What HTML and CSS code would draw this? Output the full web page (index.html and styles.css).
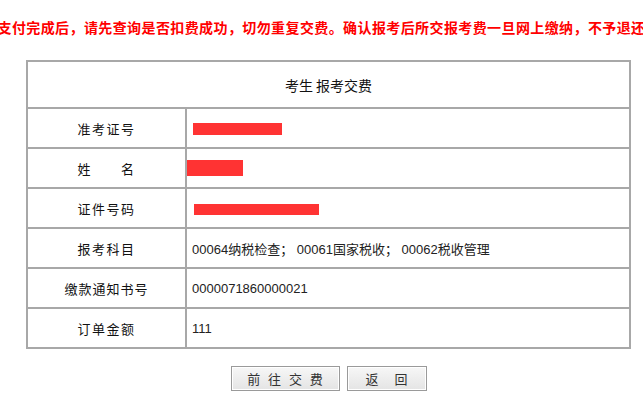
FILE: index.html
```html
<!DOCTYPE html>
<html lang="zh-CN">
<head>
<meta charset="utf-8">
<title>考生报考交费</title>
<link rel="stylesheet" href="styles.css">
</head>
<body>
<div class="notice"><span class="notice-text">支付完成后，请先查询是否扣费成功，切勿重复交费。确认报考后所交报考费一旦网上缴纳，不予退还</span></div>
<div class="wrap">
  <table class="pay">
    <tr class="head"><td colspan="2">考生 报考交费</td></tr>
    <tr><td class="lbl">准考证号</td><td class="val"><span class="mask m1"></span></td></tr>
    <tr><td class="lbl">姓　　名</td><td class="val v-name"><span class="mask m2"></span></td></tr>
    <tr><td class="lbl">证件号码</td><td class="val"><span class="mask m3"></span></td></tr>
    <tr><td class="lbl">报考科目</td><td class="val">00064纳税检查； 00061国家税收； 00062税收管理</td></tr>
    <tr><td class="lbl lbl-long">缴款通知书号</td><td class="val">0000071860000021</td></tr>
    <tr><td class="lbl">订单金额</td><td class="val">111</td></tr>
  </table>
  <div class="actions">
    <button class="btn btn-go" type="button">前 往 交 费</button>
    <button class="btn btn-back" type="button">返 回</button>
  </div>
</div>
</body>
</html>
```
FILE: styles.css
```css
html, body {
  margin: 0;
  padding: 0;
  background: #fff;
}
body {
  font-family: "Liberation Sans", "Noto Sans CJK SC", sans-serif;
  color: #000;
  overflow: hidden;
}
.notice {
  display: flex;
  justify-content: center;
  margin-top: 17px;
  height: 20px;
  line-height: 20px;
  white-space: nowrap;
}
.notice-text {
  flex: none;
  color: #ff0000;
  font-weight: bold;
  font-size: 14px;
  letter-spacing: 0.4px;
  font-family: "Noto Sans CJK SC", sans-serif;
}
.wrap {
  margin: 23px 0 0 26px;
  width: 605px;
}
.pay {
  width: 605px;
  border-collapse: collapse;
  border: 2px solid #a4a4a4;
}
.pay td {
  border: 2px solid #a8a8a8;
  padding: 0;
  font-size: 13px;
  font-family: "Liberation Sans", "Noto Sans CJK SC", sans-serif;
}
.head td {
  height: 45px;
  text-align: center;
  font-size: 14px;
  font-family: "Noto Sans CJK SC", sans-serif;
  color: #111;
}
.pay tr:not(.head) td {
  height: 38px;
}
.lbl {
  width: 157px;
  text-align: center;
  letter-spacing: 1.5px;
  font-family: "Noto Sans CJK SC", sans-serif;
  color: #111;
}
.lbl-long {
  letter-spacing: 1px;
}
.val {
  padding-left: 5px !important;
  color: #222;
}
.mask {
  display: inline-block;
  background: #ff3333;
  vertical-align: middle;
}
.m1 { width: 89px; height: 12px; margin-left: 1px; }
.m2 { width: 56px; height: 16px; margin-left: -5px; }
.m3 { width: 125px; height: 11px; margin-left: 2px; }
.actions {
  display: flex;
  justify-content: center;
  gap: 7px;
  margin-top: 17px;
}
.btn {
  height: 25px;
  padding: 0;
  border: 1px solid #9a9a9a;
  border-radius: 0;
  background: linear-gradient(#f7f7f7, #e4e4e4);
  color: #333;
  font-size: 13px;
  font-family: "Noto Sans CJK SC", sans-serif;
  line-height: 23px;
  box-shadow: inset 0 0 0 1px #fff;
}
.btn-go {
  width: 109px;
  word-spacing: 5px;
}
.btn-back {
  width: 80px;
  word-spacing: 13px;
}
```
